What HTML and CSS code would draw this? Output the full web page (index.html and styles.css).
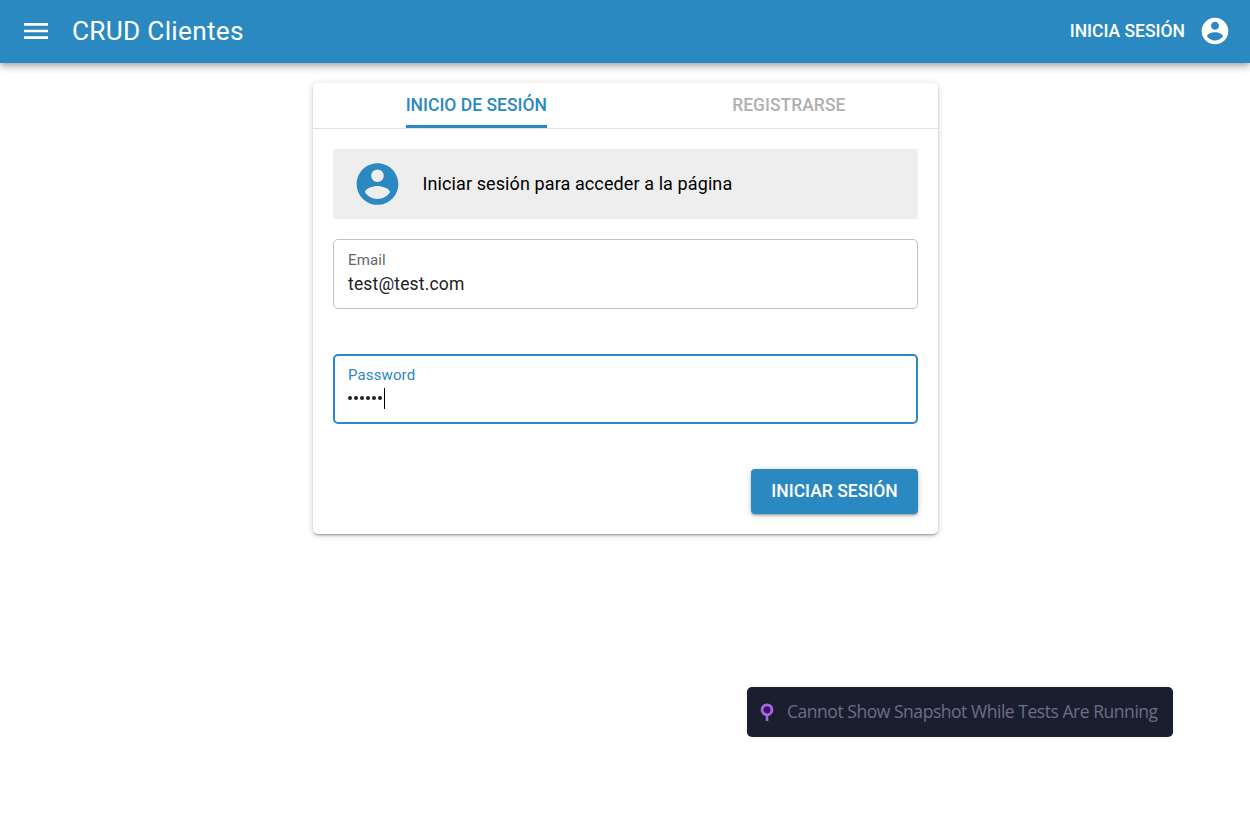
FILE: index.html
```html
<!DOCTYPE html>
<html lang="es">
<head>
<meta charset="utf-8">
<title>CRUD Clientes</title>
<link rel="stylesheet" href="styles.css">
</head>
<body>
<svg class="defs" width="0" height="0">
  <symbol id="account" viewBox="0 0 24 24"><path d="M12 2C6.48 2 2 6.48 2 12s4.48 10 10 10 10-4.48 10-10S17.52 2 12 2zm0 3c1.66 0 3 1.34 3 3s-1.34 3-3 3-3-1.34-3-3 1.34-3 3-3zm0 14.200c-2.500 0-4.710-1.280-6-3.220.030-1.990 4-3.080 6-3.080 1.990 0 5.970 1.090 6 3.080-1.290 1.940-3.500 3.220-6 3.220z"/></symbol>
</svg>
<header class="toolbar">
  <svg class="menu-icon" viewBox="0 0 24 24"><path d="M3 18h18v-2H3v2zm0-5h18v-2H3v2zm0-7v2h18V6H3z"/></svg>
  <h1 class="title">CRUD Clientes</h1>
  <a class="login">Inicia sesión <svg class="login-icon"><use href="#account"/></svg></a>
</header>
<main class="card">
  <nav class="tabs">
    <div class="tab"><span class="tab-label active">Inicio de sesión</span></div>
    <div class="tab"><span class="tab-label">Registrarse</span></div>
  </nav>
  <form class="panel">
    <div class="banner">
      <svg class="banner-icon"><use href="#account"/></svg>
      <span class="banner-text">Iniciar sesión para acceder a la página</span>
    </div>
    <div class="field">
      <span class="label">Email</span>
      <span class="value">test@test.com</span>
    </div>
    <div class="field focused">
      <span class="label">Password</span>
      <span class="value password"><i class="dot"></i><i class="dot"></i><i class="dot"></i><i class="dot"></i><i class="dot"></i><i class="dot"></i><i class="caret"></i></span>
    </div>
    <button class="submit" type="button">Iniciar sesión</button>
  </form>
</main>
<aside class="toast">
  <svg class="pin" viewBox="0 0 14 19"><path d="M7 11v7" stroke="#a36ae0" stroke-width="2.600"/><circle cx="7" cy="6.800" r="5" fill="#3b1465" stroke="#a36ae0" stroke-width="2.800"/></svg>
  <span class="toast-text">Cannot Show Snapshot While Tests Are Running</span>
</aside>
</body>
</html>
```
FILE: styles.css
```css
* { box-sizing: border-box; }
body {
  margin: 0;
  height: 825px;
  overflow: hidden;
  background: #fff;
  font-family: Roboto, "Liberation Sans", sans-serif;
  font-size: 17.5px;
  color: #000;
}
svg { display: block; flex: none; }
.defs { position: absolute; }
.toolbar {
  height: 63px;
  padding: 0 19px 1px 20px;
  display: flex;
  align-items: center;
  background: #2b89c1;
  color: #fff;
  fill: #fff;
  box-shadow: 0 2px 5px -1px rgba(0,0,0,.2), 0 5px 6px rgba(0,0,0,.14), 0 1px 12px rgba(0,0,0,.12);
}
.menu-icon { width: 32px; height: 32px; }
.title {
  flex: 1;
  margin: 0 0 0 20px;
  font-size: 26.25px;
  font-weight: 400;
  line-height: 32px;
  letter-spacing: .01em;
}
.login {
  display: flex;
  align-items: center;
  gap: 14px;
  font-weight: 500;
  text-transform: uppercase;
}
.login-icon { width: 32px; height: 32px; }
.card {
  width: 625px;
  height: 451px;
  margin: 20px 0 0 313px;
  border-radius: 5px;
  box-shadow: 0 1px 6px rgba(0,0,0,.2), 0 2px 2px rgba(0,0,0,.14), 0 3px 1px -2px rgba(0,0,0,.12);
}
.tabs {
  height: 46px;
  display: flex;
  border-bottom: 1px solid #e0e0e0;
}
.tab { flex: 1 1 auto; display: flex; justify-content: center; }
.tab-label {
  height: 45px;
  line-height: 44px;
  font-weight: 500;
  text-transform: uppercase;
  color: #b0b0b0;
}
.tab-label.active { color: #2b89c1; border-bottom: 3px solid #2b89c1; }
.panel { padding: 20px; display: flex; flex-direction: column; }
.banner {
  height: 70px;
  padding: 0 0 0 19px;
  display: flex;
  align-items: center;
  gap: 19.5px;
  background: #eee;
}
.banner-icon { width: 51px; height: 50px; fill: #2b89c1; }
.banner-text { font-size: 18px; letter-spacing: .1px; line-height: 24px; }
.field {
  height: 70px;
  margin-top: 20px;
  padding: 10px 14px;
  border: 1px solid #c2c2c2;
  border-radius: 5px;
  display: flex;
  flex-direction: column;
  color: #212121;
}
.label { font-size: 15px; line-height: 20px; letter-spacing: .12px; color: #666; }
.value { line-height: 28px; letter-spacing: .16px; }
.focused { margin-top: 45px; padding: 9px 13px; border: 2px solid #2b89c1; }
.focused .label { color: #2b89c1; }
.password { height: 26px; display: flex; align-items: center; }
.dot {
  width: 4.4px;
  height: 4.4px;
  margin: 0 1.6px 0 0;
  border-radius: 50%;
  background: #212121;
}
.caret { width: 1px; height: 21px; background: #000; }
.submit {
  align-self: flex-end;
  width: 167px;
  height: 45px;
  margin-top: 45px;
  padding: 0 0 1px;
  border: 0;
  border-radius: 4px;
  background: #2b89c1;
  color: #fff;
  font: 500 17.5px Roboto, sans-serif;
  text-transform: uppercase;
  box-shadow: 0 1px 6px rgba(0,0,0,.2), 0 2px 2px rgba(0,0,0,.14), 0 3px 1px -2px rgba(0,0,0,.12);
}
.toast {
  position: absolute;
  left: 747px;
  top: 687px;
  width: 426px;
  height: 50px;
  padding: 0 0 0 13px;
  display: flex;
  align-items: center;
  gap: 13px;
  border-radius: 5px;
  background: #1b1e2e;
  color: #6c6e89;
  box-shadow: 0 0 5px rgba(0,0,0,.08);
}
.pin { width: 14px; height: 19px; }
.toast-text {
  margin-top: -2px;
  font-family: "Open Sans", "Noto Sans", sans-serif;
  font-size: 17.5px;
  line-height: 24px;
  letter-spacing: -.46px;
  white-space: nowrap;
}
```
